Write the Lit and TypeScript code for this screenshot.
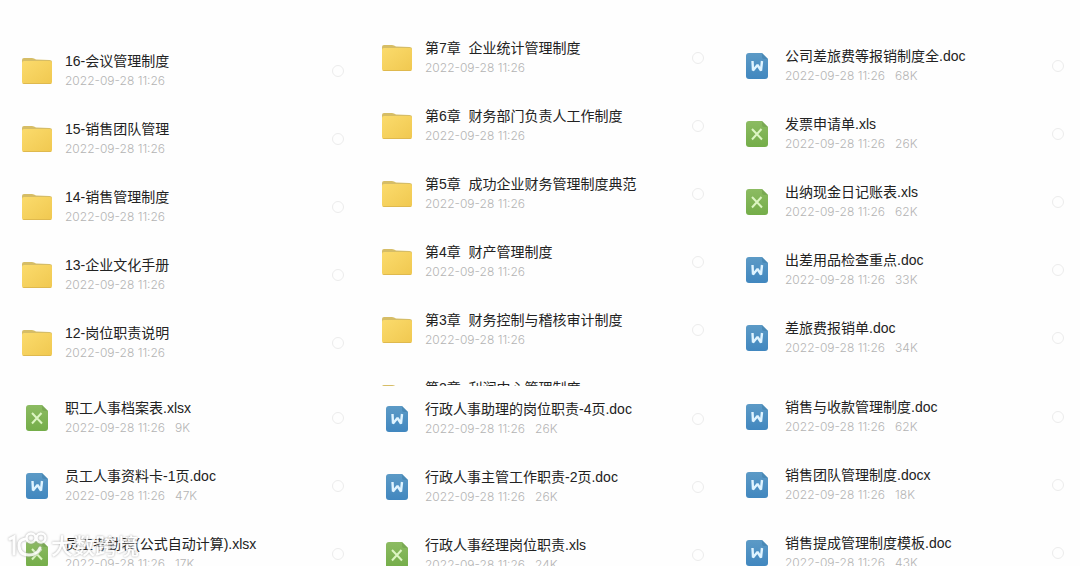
import { LitElement, html, css, svg } from "lit";
import { customElement, property } from "lit/decorators.js";

type Kind = "folder" | "word" | "sheet";
interface Entry {
  kind: Kind;
  name: string;
  size?: string;
}

const STAMP = "2022-09-28 11:26";
const folder = (name: string): Entry => ({ kind: "folder", name });
const word = (name: string, size: string): Entry => ({ kind: "word", name, size });
const sheet = (name: string, size: string): Entry => ({ kind: "sheet", name, size });

const PANELS: { id: string; entries: Entry[] }[] = [
  {
    id: "a",
    entries: [
      folder("16-会议管理制度"),
      folder("15-销售团队管理"),
      folder("14-销售管理制度"),
      folder("13-企业文化手册"),
      folder("12-岗位职责说明"),
    ],
  },
  {
    id: "b",
    entries: [
      folder("第7章  企业统计管理制度"),
      folder("第6章  财务部门负责人工作制度"),
      folder("第5章  成功企业财务管理制度典范"),
      folder("第4章  财产管理制度"),
      folder("第3章  财务控制与稽核审计制度"),
      folder("第2章  利润中心管理制度"),
    ],
  },
  {
    id: "c",
    entries: [
      word("公司差旅费等报销制度全.doc", "68K"),
      sheet("发票申请单.xls", "26K"),
      sheet("出纳现金日记账表.xls", "62K"),
      word("出差用品检查重点.doc", "33K"),
      word("差旅费报销单.doc", "34K"),
    ],
  },
  {
    id: "d",
    entries: [
      sheet("职工人事档案表.xlsx", "9K"),
      word("员工人事资料卡-1页.doc", "47K"),
      sheet("员工考勤表(公式自动计算).xlsx", "17K"),
    ],
  },
  {
    id: "e",
    entries: [
      word("行政人事助理的岗位职责-4页.doc", "26K"),
      word("行政人事主管工作职责-2页.doc", "26K"),
      sheet("行政人事经理岗位职责.xls", "24K"),
    ],
  },
  {
    id: "f",
    entries: [
      word("销售与收款管理制度.doc", "62K"),
      word("销售团队管理制度.docx", "18K"),
      word("销售提成管理制度模板.doc", "43K"),
    ],
  },
];

const folderIcon = html`<svg width="30" height="28" viewBox="0 0 30 28" aria-hidden="true">
  <defs>
    <linearGradient id="fold" x1="0" y1="0" x2="1" y2="1">
      <stop offset="0" stop-color="#fbdb6c" />
      <stop offset="1" stop-color="#f0c850" />
    </linearGradient>
  </defs>
  <path d="M0 3Q0 1 2 1H10Q12 1 14 2.500L27.500 3Q30 3 30 5V12H0Z" fill="#d6bd66" />
  <path d="M0 6Q0 4 2 4H28Q30 4 30 6V25Q30 27 28 27H2Q0 27 0 25Z" fill="url(#fold)" />
  <path d="M0.500 26Q1 27 2.500 27H27.500Q29 27 29.500 26Z" fill="#dfb94e" />
</svg>`;

const docIcon = (kind: Kind) => {
  const [top, bottom, corner] =
    kind === "word" ? ["#5c9ac6", "#4187bf", "#3c7ba8"] : ["#8cbb62", "#74ad49", "#6b9a4a"];
  return html`<svg width="22" height="26" viewBox="0 0 22 26" aria-hidden="true">
    <defs>
      <linearGradient id="page" x1="0" y1="0" x2="0" y2="1">
        <stop offset="0" stop-color=${top} />
        <stop offset="1" stop-color=${bottom} />
      </linearGradient>
    </defs>
    <path d="M3 0H16L22 6V23Q22 26 19 26H3Q0 26 0 23V3Q0 0 3 0Z" fill="url(#page)" />
    <path d="M16 0L22 6H18Q16 6 16 4Z" fill=${corner} opacity="0.5" />
    ${kind === "word"
      ? svg`<path d="M6.500 8L7 17.500L11.500 12L15 17.500L16 8" fill="none" stroke="#e0f4ff" stroke-width="2.400" stroke-linejoin="bevel" />`
      : svg`<path d="M6 8L16 18.500M15.500 8L6 18.500" fill="none" stroke="#dcf5c2" stroke-width="2" />`}
  </svg>`;
};

@customElement("file-row")
class FileRow extends LitElement {
  @property({ attribute: false }) entry!: Entry;

  static styles = css`
    :host {
      display: flex;
      align-items: center;
      height: 40px;
      padding: 0 16px 0 21px;
    }
    .icon {
      display: flex;
      justify-content: center;
      width: 32px;
      margin-right: 12px;
    }
    .text {
      flex: 1;
      min-width: 0;
    }
    .name {
      display: block;
      font-family: "Liberation Sans", "Noto Sans CJK SC", sans-serif;
      font-size: 14px;
      line-height: 20px;
      color: #222;
      white-space: pre;
    }
    .meta {
      display: flex;
      gap: 10px;
      font-size: 12px;
      line-height: 20px;
      font-weight: 300;
      color: #b4b4b4;
    }
    .pick {
      appearance: none;
      width: 12px;
      height: 12px;
      margin: 0;
      border: 1px solid #ececec;
      border-radius: 50%;
    }
    .pick:checked {
      background: #5a9bcb;
    }
  `;

  render() {
    const { kind, name, size } = this.entry;
    return html`
      <span class="icon">${kind === "folder" ? folderIcon : docIcon(kind)}</span>
      <div class="text">
        <label class="name" for="pick">${name}</label>
        <div class="meta"><span>${STAMP}</span>${size ? html`<span>${size}</span>` : ""}</div>
      </div>
      <input class="pick" id="pick" type="checkbox" />
    `;
  }
}

@customElement("app-root")
class AppRoot extends LitElement {
  static styles = css`
    :host {
      display: block;
      position: relative;
      height: 100vh;
      overflow: hidden;
      background: #fefefe;
      font-family: Inter, "Noto Sans CJK SC", sans-serif;
    }
    .board {
      display: grid;
      grid-template-columns: repeat(3, 1fr);
      grid-template-rows: 386px auto;
    }
    .panel {
      display: flex;
      flex-direction: column;
      gap: 28px;
      min-width: 0;
      overflow: hidden;
      box-sizing: border-box;
    }
    .a { padding-top: 51px; }
    .b { padding-top: 38px; }
    .c { padding-top: 46px; }
    .d { padding-top: 12px; }
    .e { padding-top: 13px; }
    .f { padding-top: 11px; }
    .mark {
      position: absolute;
      left: 8px;
      bottom: 4px;
      display: flex;
      align-items: center;
      gap: 3px;
      color: #fff;
      font-size: 22px;
      line-height: 32px;
      font-weight: 500;
      opacity: 0.85;
      pointer-events: none;
      filter: drop-shadow(0 0 1px #999);
    }
  `;

  render() {
    return html`
      <main class="board">
        ${PANELS.map(
          (p) => html`<section class="panel ${p.id}">
            ${p.entries.map((e) => html`<file-row .entry=${e}></file-row>`)}
          </section>`
        )}
      </main>
      <div class="mark">
        <svg width="40" height="30" viewBox="0 0 40 30" fill="none" stroke="#fff" stroke-width="3" stroke-linecap="round" aria-hidden="true">
          <path d="M2 8L6 6V23" />
          <path d="M17 8Q11 9 11 14Q11 24 21 24Q29 24 32 17" />
          <circle cx="23" cy="7" r="4.500" stroke-width="2.500" />
          <circle cx="33" cy="7" r="4.500" stroke-width="2.500" />
        </svg>
        <span>大数跨境</span>
      </div>
    `;
  }
}
